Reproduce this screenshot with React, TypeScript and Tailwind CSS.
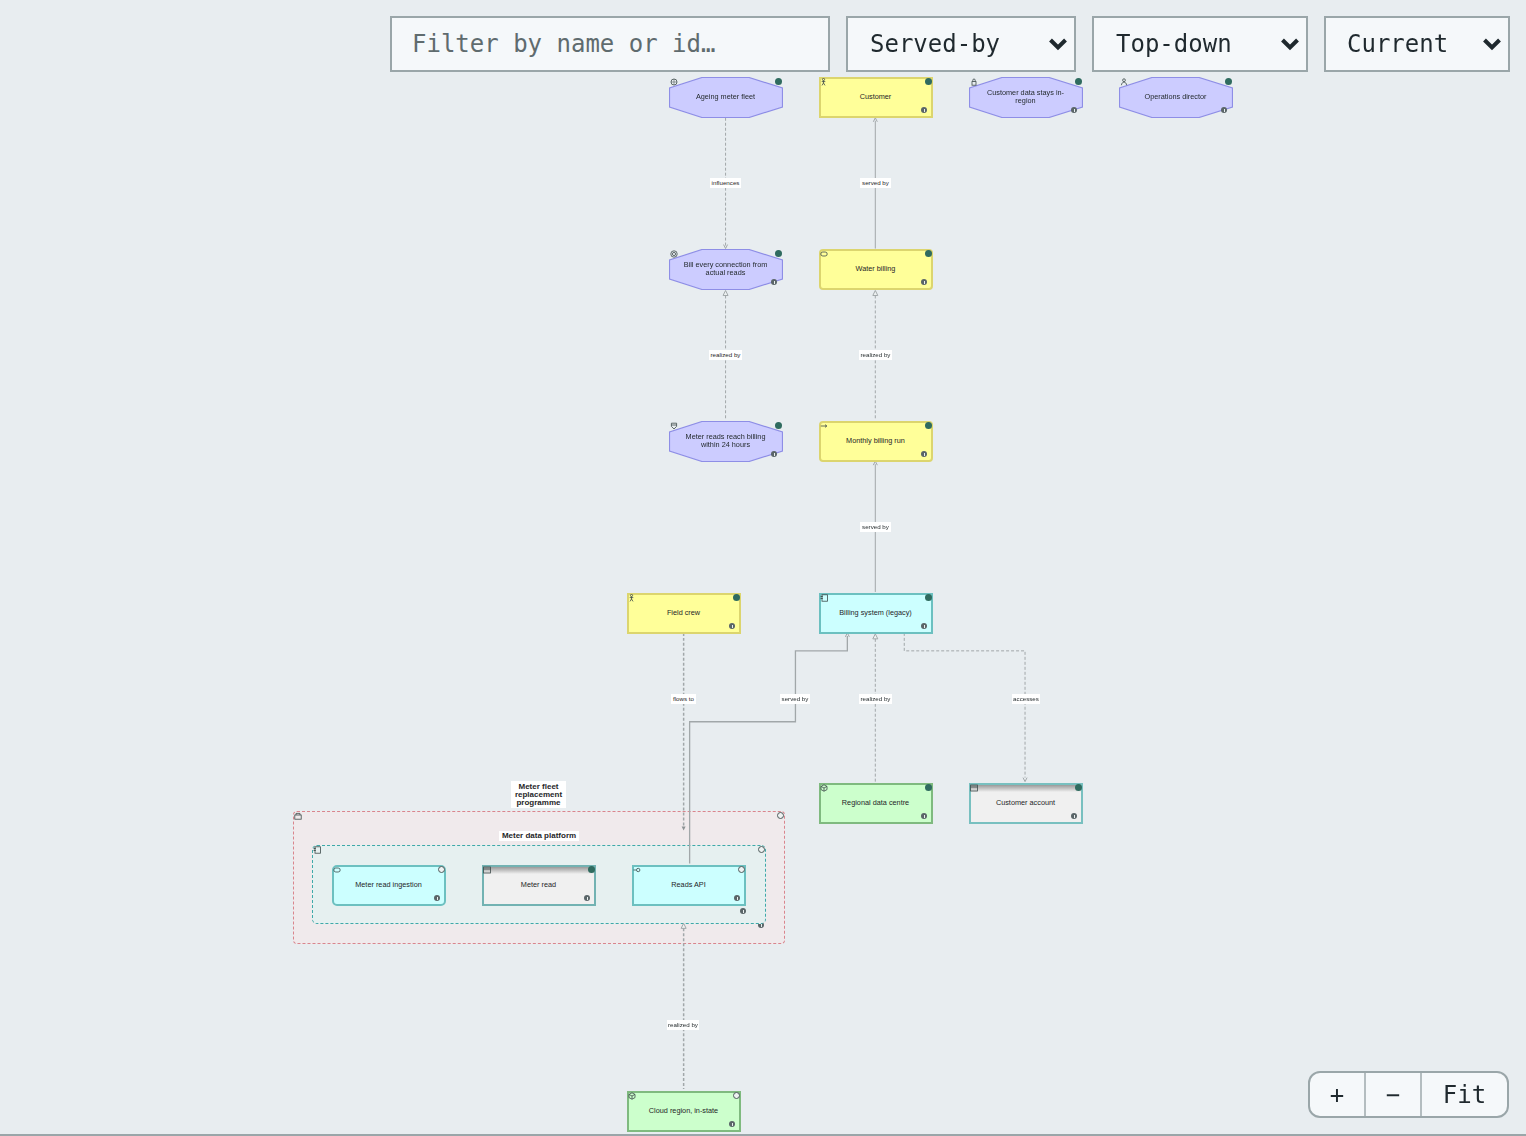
import { ReactNode } from 'react';

type IconKind =
  | 'driver'
  | 'actor'
  | 'lock'
  | 'person'
  | 'goal'
  | 'shield'
  | 'service'
  | 'process'
  | 'component'
  | 'data'
  | 'cube'
  | 'iface'
  | 'package';

interface DiagramNode {
  id: string;
  label: ReactNode;
  box: string;
  look: string;
  octagon?: boolean;
  icon: IconKind;
  ring?: boolean;
  noInfo?: boolean;
}

const MONO = "font-['DejaVu_Sans_Mono',monospace]";

const nodes: DiagramNode[] = [
  { id: 'ageing', label: 'Ageing meter fleet', box: 'left-[669px] top-[77px]', look: '', octagon: true, icon: 'driver', noInfo: true },
  { id: 'customer', label: 'Customer', box: 'left-[819px] top-[77px]', look: 'bg-[#ffff99] border-[#dcd56e]', icon: 'actor' },
  { id: 'in-region', label: <>Customer data stays in-<br />region</>, box: 'left-[969px] top-[77px]', look: '', octagon: true, icon: 'lock' },
  { id: 'director', label: 'Operations director', box: 'left-[1119px] top-[77px]', look: '', octagon: true, icon: 'person' },
  { id: 'bill-every', label: <>Bill every connection from<br />actual reads</>, box: 'left-[669px] top-[249px]', look: '', octagon: true, icon: 'goal' },
  { id: 'water', label: 'Water billing', box: 'left-[819px] top-[249px]', look: 'bg-[#ffff99] border-[#dcd56e] rounded-[4px]', icon: 'service' },
  { id: 'reach', label: <>Meter reads reach billing<br />within 24 hours</>, box: 'left-[669px] top-[421px]', look: '', octagon: true, icon: 'shield' },
  { id: 'run', label: 'Monthly billing run', box: 'left-[819px] top-[421px]', look: 'bg-[#ffff99] border-[#dcd56e] rounded-[4px]', icon: 'process' },
  { id: 'crew', label: 'Field crew', box: 'left-[627px] top-[593px]', look: 'bg-[#ffff99] border-[#dcd56e]', icon: 'actor' },
  { id: 'legacy', label: 'Billing system (legacy)', box: 'left-[819px] top-[593px]', look: 'bg-[#ccffff] border-[#6cc0c0]', icon: 'component' },
  { id: 'centre', label: 'Regional data centre', box: 'left-[819px] top-[783px]', look: 'bg-[#ccffcc] border-[#7fba7f]', icon: 'cube' },
  { id: 'account', label: 'Customer account', box: 'left-[969px] top-[783px]', look: 'bg-[#f0f0f0] border-[#78c0c0]', icon: 'data' },
  { id: 'ingestion', label: 'Meter read ingestion', box: 'left-[332px] top-[865px]', look: 'bg-[#ccffff] border-[#6cc0c0] rounded-[5px]', icon: 'service', ring: true },
  { id: 'read', label: 'Meter read', box: 'left-[482px] top-[865px]', look: 'bg-[#f0f0f0] border-[#72b2b2]', icon: 'data' },
  { id: 'api', label: 'Reads API', box: 'left-[632px] top-[865px]', look: 'bg-[#ccffff] border-[#6cc0c0]', icon: 'iface', ring: true },
  { id: 'cloud', label: 'Cloud region, in-state', box: 'left-[627px] top-[1091px]', look: 'bg-[#ccffcc] border-[#7fba7f]', icon: 'cube', ring: true },
];

const edgeLabels = [
  { text: 'influences', box: 'left-[710px] top-[178px] w-[31px]' },
  { text: 'served by', box: 'left-[860px] top-[178px] w-[31px]' },
  { text: 'realized by', box: 'left-[709px] top-[350px] w-[33px]' },
  { text: 'realized by', box: 'left-[859px] top-[350px] w-[33px]' },
  { text: 'served by', box: 'left-[860px] top-[522px] w-[31px]' },
  { text: 'flows to', box: 'left-[671px] top-[694px] w-[25px]' },
  { text: 'served by', box: 'left-[780px] top-[694px] w-[30px]' },
  { text: 'realized by', box: 'left-[859px] top-[694px] w-[33px]' },
  { text: 'accesses', box: 'left-[1012px] top-[694px] w-[28px]' },
  { text: 'realized by', box: 'left-[667px] top-[1020px] w-[32px]' },
];

function NodeIcon({ kind }: { kind: IconKind }) {
  const common = { fill: 'none', stroke: '#3d4a4a', strokeWidth: 0.8 };
  return (
    <svg viewBox="0 0 8 8" className="h-2 w-2 shrink-0">
      {kind === 'driver' && (
        <g {...common}>
          <circle cx="4" cy="4" r="3" />
          <path d="M4 1v6M1 4h6" strokeWidth="0.5" />
        </g>
      )}
      {kind === 'actor' && (
        <g {...common}>
          <circle cx="3.5" cy="1.5" r="1.1" />
          <path d="M3.5 2.6v2.4M1.7 3.6h3.6M3.5 5L2 7.4M3.5 5L5 7.4" />
        </g>
      )}
      {kind === 'lock' && (
        <g {...common}>
          <rect x="2" y="3.6" width="4" height="3.6" />
          <path d="M2.8 3.6V2.2a1.2 1.2 0 0 1 2.4 0v1.4" />
        </g>
      )}
      {kind === 'person' && (
        <g {...common}>
          <circle cx="4" cy="2.2" r="1.4" />
          <path d="M1.4 7.2C1.6 5 2.8 4.2 4 4.2s2.4.8 2.6 3" />
        </g>
      )}
      {kind === 'goal' && (
        <g {...common}>
          <circle cx="4" cy="4" r="3.2" />
          <circle cx="4" cy="4" r="1.6" />
        </g>
      )}
      {kind === 'shield' && (
        <g {...common}>
          <path d="M1.4 1.2h5.2v3.2L4 7 1.4 4.4z" />
          <path d="M1.4 3h5.2" />
        </g>
      )}
      {kind === 'service' && <rect x="0.8" y="2" width="6.4" height="4" rx="2" {...common} />}
      {kind === 'process' && (
        <g {...common}>
          <path d="M0.8 4h6M5 2.6L6.8 4 5 5.4" />
        </g>
      )}
      {kind === 'component' && (
        <g {...common}>
          <rect x="2" y="0.8" width="5.4" height="6.4" />
          <path d="M0.6 2.4h2.2M0.6 4.4h2.2" strokeWidth="1" />
        </g>
      )}
      {kind === 'data' && (
        <g {...common}>
          <rect x="0.6" y="1" width="6.8" height="6" />
          <path d="M0.6 3h6.8" />
        </g>
      )}
      {kind === 'cube' && (
        <g {...common}>
          <path d="M4 0.8L7 2.4V5.6L4 7.2 1 5.6V2.4zM1 2.4L4 4l3-1.6M4 4v3.2" />
        </g>
      )}
      {kind === 'iface' && (
        <g {...common}>
          <path d="M0.4 4h3" />
          <circle cx="5.2" cy="4" r="1.7" />
        </g>
      )}
      {kind === 'package' && (
        <g {...common}>
          <rect x="0.8" y="3" width="6.4" height="4.2" />
          <path d="M2 3V1.4h4V3" />
        </g>
      )}
    </svg>
  );
}

function InfoDot() {
  return (
    <span className="flex h-[6px] w-[6px] shrink-0 items-center justify-center rounded-full bg-[#5a6568]">
      <span className="h-[3px] w-[1px] bg-[#e8eeee]" />
    </span>
  );
}

function StatusDot({ ring }: { ring?: boolean }) {
  return ring ? (
    <span className="h-[7px] w-[7px] shrink-0 rounded-full border border-[#4d5a5a] bg-[#eef2f2]" />
  ) : (
    <span className="h-[7px] w-[7px] shrink-0 rounded-full bg-[#2f6b5f]" />
  );
}

function Node({ node }: { node: DiagramNode }) {
  return (
    <div className={`absolute h-[41px] w-[114px] ${node.box}`}>
      {node.octagon ? (
        <svg viewBox="0 0 114 41" className="absolute inset-0 h-full w-full">
          <polygon
            points="33,0.5 80,0.5 113.5,11 113.5,30 80,40.5 33,40.5 0.5,30 0.5,11"
            fill="#ccccff"
            stroke="#8e8ee6"
            strokeWidth="1.2"
          />
        </svg>
      ) : (
        <div className={`absolute inset-0 border-2 ${node.look}`}>
          {node.icon === 'data' && (
            <div className="h-[7px] bg-gradient-to-b from-[#9a9a9a] to-[#f0f0f0]" />
          )}
        </div>
      )}
      <div className="absolute inset-0 flex items-center justify-center pb-[2px] pr-[1px] text-center text-[7.3px] leading-[7.5px] text-[#1f2628]">
        <span>{node.label}</span>
      </div>
      {/* corner badges */}
      <div className="absolute inset-0 flex flex-col justify-between pb-[5px] pl-[1px] pr-[1px] pt-[1px]">
        <div className="flex items-start justify-between">
          <NodeIcon kind={node.icon} />
          <StatusDot ring={node.ring} />
        </div>
        {!node.noInfo && (
          <div className="flex justify-end pr-[5px]">
            <InfoDot />
          </div>
        )}
      </div>
    </div>
  );
}

function Edges() {
  const line = { fill: 'none', stroke: '#a1a7a9', strokeWidth: 1 };
  const dash = { ...line, strokeDasharray: '3 2' };
  return (
    <svg viewBox="0 0 1526 1136" className="absolute inset-0 h-full w-full">
      {/* influences */}
      <path d="M725.5 118V246" {...dash} />
      <path d="M723.5 245l2 4 2-4" {...line} />
      {/* served by */}
      <path d="M875.5 121V249" {...line} />
      <path d="M873.5 122l2-4 2 4" {...line} />
      {/* realized by */}
      <path d="M725.5 296V421" {...dash} />
      <path d="M723 296l2.5-5 2.5 5z" {...line} fill="#eef2f2" />
      <path d="M875.5 296V421" {...dash} />
      <path d="M873 296l2.5-5 2.5 5z" {...line} fill="#eef2f2" />
      {/* served by */}
      <path d="M875.5 465V593" {...line} />
      <path d="M873.5 466l2-4 2 4" {...line} />
      {/* flows to */}
      <path d="M683.5 634V828" {...dash} strokeWidth={1.5} />
      <path d="M681.5 828h4l-2 4z" fill="#8c9294" />
      {/* served by, routed */}
      <path d="M689.5 865V723H795.5V652H847.5V637" {...line} strokeWidth={1.3} />
      <path d="M845.5 638l2-4 2 4" {...line} />
      {/* realized by */}
      <path d="M875.5 640V783" {...dash} />
      <path d="M873 640l2.5-5 2.5 5z" {...line} fill="#eef2f2" />
      {/* accesses */}
      <path d="M904.5 634V652H1025.5V779" {...dash} />
      <path d="M1023.5 779l2 4 2-4" {...line} />
      {/* realized by */}
      <path d="M683.5 930V1091" {...dash} strokeWidth={1.5} />
      <path d="M681 930l2.5-5 2.5 5z" {...line} fill="#eef2f2" />
    </svg>
  );
}

function Dropdown({ value, width, pad }: { value: string; width: string; pad: string }) {
  return (
    <div className={`relative h-14 ${width}`}>
      <select
        defaultValue={value}
        className={`h-full w-full appearance-none border-2 border-[#9aa6a9] bg-[#f5f8fa] text-2xl text-[#1f292e] ${pad} ${MONO}`}
      >
        <option>{value}</option>
      </select>
      <svg viewBox="0 0 20 14" className="pointer-events-none absolute right-[8px] top-[21px] h-[14px] w-[20px]">
        <path d="M2.5 3L10 10.5 17.5 3" fill="none" stroke="#1f292e" strokeWidth="4" />
      </svg>
    </div>
  );
}

export default function App() {
  return (
    <div className="relative h-[1136px] w-[1526px] overflow-hidden border-b-2 border-[#9aa6a9] bg-[#e8edf0] font-['Liberation_Sans',Arial,sans-serif]">
      <div className="absolute inset-0 blur-[0.3px]">
        {/* groups */}
        <div className="absolute left-[293px] top-[811px] flex h-[133px] w-[492px] flex-col rounded-[4px] border border-dashed border-[#d9858d] bg-[#f0eaec]">
          <div className="flex items-start justify-between">
            <NodeIcon kind="package" />
            <StatusDot ring />
          </div>
          <div className="mt-auto flex justify-end pb-[15px] pr-[20px]">
            <InfoDot />
          </div>
        </div>
        <div className="absolute left-[312px] top-[845px] flex h-[79px] w-[454px] flex-col rounded-[5px] border border-dashed border-[#3fa9a9] bg-[#e6f0f0]">
          <div className="flex items-start justify-between">
            <NodeIcon kind="component" />
            <StatusDot ring />
          </div>
          <div className="mt-auto flex justify-end pb-[9px] pr-[19px]">
            <InfoDot />
          </div>
        </div>

        <Edges />

        {nodes.map((node) => (
          <Node key={node.id} node={node} />
        ))}

        {edgeLabels.map((label, i) => (
          <div
            key={i}
            className={`absolute flex h-[10px] items-center justify-center whitespace-nowrap bg-white text-[6.2px] text-[#1f2628] ${label.box}`}
          >
            {label.text}
          </div>
        ))}

        <div className="absolute left-[511px] top-[781px] w-[55px] bg-white py-[1.5px] text-center text-[8px] font-bold leading-[8px] text-[#1f2628]">
          Meter fleet<br />replacement<br />programme
        </div>
        <div className="absolute left-[499px] top-[831px] flex h-[10px] w-[80px] items-center justify-center bg-white text-[8px] font-bold text-[#1f2628]">
          Meter data platform
        </div>
      </div>

      <div className="relative flex justify-end gap-4 pr-4 pt-4">
        <input
          placeholder="Filter by name or id…"
          className={`h-14 w-[440px] border-2 border-[#9aa6a9] bg-[#f5f8fa] pl-5 text-2xl text-[#1f292e] placeholder:text-[#5f6b6e] ${MONO}`}
        />
        <Dropdown value="Served-by" width="w-[230px]" pad="pl-[22px]" />
        <Dropdown value="Top-down" width="w-[216px]" pad="pl-[22px]" />
        <Dropdown value="Current" width="w-[186px]" pad="pl-[21px]" />
      </div>

      <div className={`absolute bottom-[16px] right-[17px] flex h-[47px] w-[201px] overflow-hidden rounded-xl border-2 border-[#9aa6a9] bg-[#f5f8fa] text-2xl text-[#1f292e] ${MONO}`}>
        <button className="w-[56px] border-r-2 border-[#b4bdc0]">+</button>
        <button className="w-[56px] border-r-2 border-[#b4bdc0]">−</button>
        <button className="flex-1">Fit</button>
      </div>
    </div>
  );
}
